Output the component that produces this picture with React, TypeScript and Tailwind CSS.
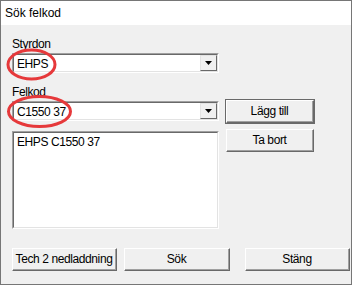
import React from "react";

const font = { fontFamily: '"Liberation Sans", Arial, sans-serif' };

function Combo({ value }: { value: string }) {
  return (
    <div className="flex h-[20px] w-[207px] border-t border-l border-t-[#a0a0a0] border-l-[#a0a0a0] border-b border-r border-b-white border-r-white">
      <div className="flex flex-1 border-t border-l border-t-[#696969] border-l-[#696969] border-b border-r border-b-[#e3e3e3] border-r-[#e3e3e3] bg-white">
        <div className="flex-1 pl-[3px] pt-[1px] text-[12px] leading-[16px] text-black tracking-[-0.4px]">{value}</div>
        <div className="flex h-[16px] w-[17px] items-center justify-center border-t border-l border-t-[#e3e3e3] border-l-[#e3e3e3] border-b border-r border-b-[#696969] border-r-[#696969] bg-[#f0f0f0]">
          <svg width="7" height="4" viewBox="0 0 7 4">
            <polygon points="0,0 7,0 3.5,4" fill="#000" />
          </svg>
        </div>
      </div>
    </div>
  );
}

function Btn({ label, w, def }: { label: string; w: string; def?: boolean }) {
  return (
    <div
      className={`flex h-[23px] ${w} items-center justify-center border-t border-l border-t-white border-l-white border-b border-r border-b-[#696969] border-r-[#696969] bg-[#f0f0f0] text-[12px] text-black tracking-[-0.4px] ${
        def ? "outline outline-1 outline-[#696969]" : ""
      }`}
    >
      <div className="flex h-full w-full items-center justify-center border-b border-r border-b-[#a0a0a0] border-r-[#a0a0a0]">
        {label}
      </div>
    </div>
  );
}

export default function App() {
  return (
    <div style={font} className="relative h-[285px] w-[352px] overflow-hidden border border-[#767676] bg-[#f0f0f0]">
      <div className="flex h-[24px] items-center bg-white pl-[4px] text-[12px] text-black">Sök felkod</div>
      <div className="flex gap-[7px] pl-[11px] pt-[13px]">
        <div className="flex w-[207px] flex-col">
          <div className="h-[15px] text-[12px] leading-[13px] text-black tracking-[-0.4px]">Styrdon</div>
          <Combo value="EHPS" />
          <div className="mt-[12px] h-[16px] text-[12px] leading-[14px] text-black tracking-[-0.4px]">Felkod</div>
          <Combo value="C1550 37" />
          <div className="mt-[10px] h-[98px] w-[207px] border-t border-l border-t-[#a0a0a0] border-l-[#a0a0a0] border-b border-r border-b-white border-r-white">
            <div className="h-full w-full border-t border-l border-t-[#696969] border-l-[#696969] border-b border-r border-b-[#e3e3e3] border-r-[#e3e3e3] bg-white pl-[3px] pt-[2px] text-[12px] leading-[14px] text-black tracking-[-0.4px]">
              EHPS C1550 37
            </div>
          </div>
        </div>
        <div className="flex flex-col gap-[6px] pt-[62px]">
          <Btn label="Lägg till" w="w-[88px]" def />
          <Btn label="Ta bort" w="w-[88px]" />
        </div>
      </div>
      <div className="mt-[19px] flex gap-[7px] pl-[11px]">
        <Btn label="Tech 2 nedladdning" w="w-[105px]" />
        <Btn label="Sök" w="w-[106px]" />
        <div className="w-[1px]" />
        <Btn label="Stäng" w="w-[105px]" />
      </div>
      <svg className="pointer-events-none absolute left-[-1px] top-[-1px]" width="352" height="285">
        <ellipse cx="31.5" cy="64.5" rx="23.5" ry="14.5" fill="none" stroke="#e6393b" strokeWidth="3" />
        <ellipse cx="39.5" cy="111.5" rx="31" ry="15" fill="none" stroke="#e6393b" strokeWidth="3" />
      </svg>
    </div>
  );
}
